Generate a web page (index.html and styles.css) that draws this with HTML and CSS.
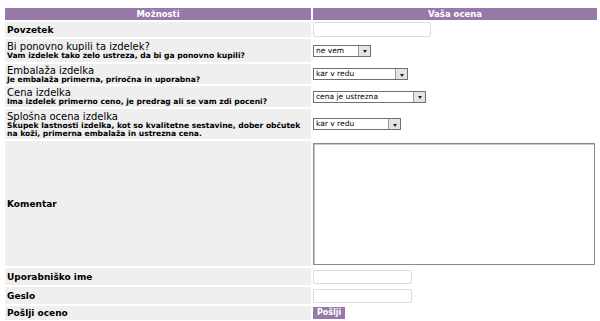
FILE: index.html
```html
<!DOCTYPE html>
<html lang="sl">
<head>
  <meta charset="UTF-8">
  <title>Ocena izdelka</title>
  <link rel="stylesheet" href="styles.css">
</head>
<body>

<form class="review">
  <table class="grid">
    <tr>
      <th class="head">Možnosti</th>
      <th class="head">Vaša ocena</th>
    </tr>
    <tr class="r-sum">
      <td class="label"><b>Povzetek</b></td>
      <td class="field"><input type="text" class="txt txt-sum"></td>
    </tr>
    <tr class="r-buy">
      <td class="label">
        <div class="q">Bi ponovno kupili ta izdelek?</div>
        <div class="hint">Vam izdelek tako zelo ustreza, da bi ga ponovno kupili?</div>
      </td>
      <td class="field">
        <span class="pick w-58"><select><option>ne vem</option></select><span class="arrow"></span></span>
      </td>
    </tr>
    <tr class="r-pack">
      <td class="label">
        <div class="q">Embalaža izdelka</div>
        <div class="hint">Je embalaža primerna, priročna in uporabna?</div>
      </td>
      <td class="field">
        <span class="pick w-95"><select><option>kar v redu</option></select><span class="arrow"></span></span>
      </td>
    </tr>
    <tr class="r-price">
      <td class="label">
        <div class="q">Cena izdelka</div>
        <div class="hint">Ima izdelek primerno ceno, je predrag ali se vam zdi poceni?</div>
      </td>
      <td class="field">
        <span class="pick w-113"><select><option>cena je ustrezna</option></select><span class="arrow"></span></span>
      </td>
    </tr>
    <tr class="r-all">
      <td class="label">
        <div class="q">Splošna ocena izdelka</div>
        <div class="hint">Skupek lastnosti izdelka, kot so kvalitetne sestavine, dober občutek na koži, primerna embalaža in ustrezna cena.</div>
      </td>
      <td class="field">
        <span class="pick w-88"><select><option>kar v redu</option></select><span class="arrow"></span></span>
      </td>
    </tr>
    <tr class="r-note">
      <td class="label"><b>Komentar</b></td>
      <td class="field"><textarea class="note"></textarea></td>
    </tr>
    <tr class="r-user">
      <td class="label"><b>Uporabniško ime</b></td>
      <td class="field"><input type="text" class="txt txt-short"></td>
    </tr>
    <tr class="r-pass">
      <td class="label"><b>Geslo</b></td>
      <td class="field"><input type="password" class="txt txt-short"></td>
    </tr>
    <tr class="r-send">
      <td class="label"><b>Pošlji oceno</b></td>
      <td class="field"><button type="button" class="send">Pošlji</button></td>
    </tr>
  </table>
</form>

</body>
</html>
```

FILE: styles.css
```css
body {
  --purple: #9679a8;
  --cell: #efefef;

  margin: 6px 1px 0 3px;
  background: #fff;
  font-family: 'DejaVu Sans', Verdana, sans-serif;
  color: #000;
}

.grid {
  width: 596px;
  border-spacing: 2px;
  border-collapse: separate;
}

.grid td {
  padding: 0 2px;
  vertical-align: middle;
}

.head {
  background: var(--purple);
  color: #fff;
  font-size: 8.5px;
  font-weight: bold;
  height: 12px;
  line-height: 12px;
  padding: 0;
  text-align: center;
}

.head:first-child {
  width: 306px;
}

.label {
  background: var(--cell);
  font-size: 9px;
  line-height: 10px;
}

.field {
  background: #fff;
  font-size: 8px;
  line-height: 10px;
  padding-left: 0 !important;
}

.q {
  font-size: 10px;
  line-height: 11px;
}

.hint {
  font-size: 7.6px;
  font-weight: bold;
  line-height: 8px;
}

.r-sum td { height: 15px; }
.r-buy td { height: 23px; }
.r-pack td { height: 20px; }
.r-price td { height: 21px; }
.r-all td { height: 30px; }
.r-note td { height: 125px; }
.r-user td { height: 17px; }
.r-pass td { height: 17px; }
.r-send td { height: 14px; }

/* fake windows style dropdown */
.pick {
  display: inline-flex;
  align-items: stretch;
  height: 10px;
  border: 1px solid #6f6f6f;
  background: #fff;
  vertical-align: middle;
}

.pick select {
  appearance: none;
  -webkit-appearance: none;
  flex: 1;
  min-width: 0;
  border: none;
  background: transparent;
  font-family: inherit;
  font-size: 7.5px;
  line-height: 10px;
  padding: 0 0 0 2px;
  margin: 0;
  height: 10px;
  color: #000;
}

.arrow {
  width: 11px;
  background: #e4e4e4;
  border-left: 1px solid #9a9a9a;
  display: flex;
  align-items: center;
  justify-content: center;
}

.arrow::after {
  content: '';
  border-left: 2.5px solid transparent;
  border-right: 2.5px solid transparent;
  border-top: 3px solid #222;
  margin-top: 2px;
}

.w-58 { width: 56px; }
.w-95 { width: 93px; }
.w-113 { width: 111px; }
.w-88 { width: 86px; }

.txt {
  display: block;
  box-sizing: border-box;
  height: 15px;
  border: 1px solid #dcdcdc;
  border-radius: 2px;
  padding: 0 2px;
  font-family: inherit;
  font-size: 8px;
  margin: 0;
}

.txt-sum { width: 118px; }
.txt-short { width: 99px; height: 14px; }

.note {
  display: block;
  box-sizing: border-box;
  width: 282px;
  height: 122px;
  margin: 0;
  border: 1px solid #8a8a8a;
  box-shadow: inset 1px 1px 0 #c8c8c8;
  resize: none;
  font-family: inherit;
}

.send {
  display: block;
  height: 12px;
  padding: 0 4px;
  margin: 0;
  border: none;
  background: var(--purple);
  color: #fff;
  font-family: inherit;
  font-size: 8px;
  font-weight: bold;
  line-height: 12px;
}
```
